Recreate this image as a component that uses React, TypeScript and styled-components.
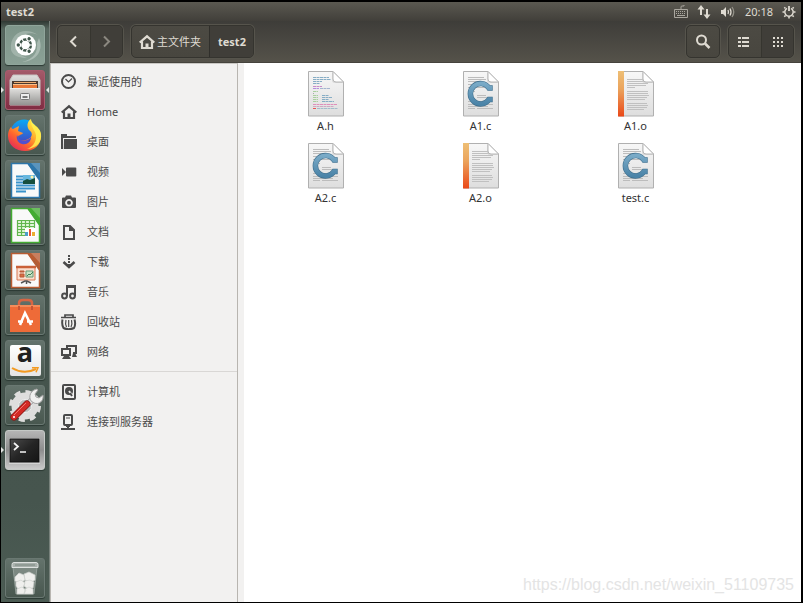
import React from "react";
import styled, { createGlobalStyle, css } from "styled-components";

const GlobalStyle = createGlobalStyle`
  *, *::before, *::after { box-sizing: border-box; }
  body {
    margin: 0;
    background: #000;
    color: #3c3c3c;
    font: 11px/16px "Noto Sans", "Noto Sans CJK SC", sans-serif;
  }
  button { font: inherit; color: inherit; border: 0; padding: 0; margin: 0; background: none; }
  svg { display: block; flex: none; }
  ul { list-style: none; margin: 0; padding: 0; }
`;

const Desktop = styled.div`
  display: flex;
  flex-direction: column;
  min-height: 100vh;
  padding: 2px 2px 1px 1px;
  background: #000;
`;

const MenuBar = styled.header`
  display: flex;
  align-items: center;
  justify-content: space-between;
  height: 19px;
  padding: 0 5px;
  background: linear-gradient(#5b5951, #413f3a);
  color: #dfdbd2;
`;

const WindowTitle = styled.strong`
  font-size: 11px;
`;

const Indicators = styled.div`
  display: flex;
  align-items: center;
  gap: 9px;
`;

const Indicator = styled.button`
  display: grid;
  place-items: center;
`;

const Clock = styled.time`
  font-size: 11px;
`;

const Workspace = styled.div`
  flex: 1;
  display: flex;
`;

const Launcher = styled.nav`
  flex: none;
  display: flex;
  flex-direction: column;
  gap: 5px;
  width: 49px;
  padding: 4px 0 4px 4px;
  background: linear-gradient(#2f3833 0, #56665e 8px, #5b6962 60px, #53615a 165px, #44534c 190px, #46554e 480px, #4c5c54 100%);
  border-right: 1px solid #77817b;
`;

const Tile = styled.button<{ $tone?: "dash" | "active" | "running" }>`
  position: relative;
  display: grid;
  place-items: center;
  flex: none;
  width: 40px;
  height: 40px;
  border-radius: 3px;
  border: 1px solid #6a7872;
  background: linear-gradient(#64736c, #48574f);
  box-shadow: 0 1px 1px #2b3933;
  ${(p) => p.$tone === "dash" && css`background: linear-gradient(#7e958a, #8ba196); border-color: #90a59b;`}
  ${(p) => p.$tone === "active" && css`background: linear-gradient(#a35a69, #812d43); border-color: #a95c6e;`}
  ${(p) => p.$tone === "running" && css`background: linear-gradient(#b5b5b5, #8d8d8d 50%, #c9c9c9); border-color: #c4c8c5;`}
  &:last-child { margin-top: auto; }
`;

const Marker = styled.span<{ $side: "left" | "right" }>`
  position: absolute;
  top: 16px;
  border: 3px solid transparent;
  ${(p) => (p.$side === "left" ? css`left: -5px; border-left-color: #e4e6e4; border-right: 0;` : css`right: -5px; border-right-color: #e4e6e4; border-left: 0;`)}
`;

const FileWindow = styled.main`
  flex: 1;
  min-width: 0;
  display: flex;
  flex-direction: column;
  background: #f2f1f0;
`;

const Toolbar = styled.div`
  display: flex;
  gap: 8px;
  height: 42px;
  padding: 4px 7px 4px 7px;
  background: linear-gradient(#3e3d39, #55524a);
  border-bottom: 1px solid #45433d;
  color: #dfdbd2;
`;

const Spacer = styled.div`
  flex: 1;
`;

const ButtonGroup = styled.div`
  display: flex;
  height: 33px;
  border: 1px solid #35342f;
  border-radius: 5px;
  box-shadow: 0 0 0 1px #56544c;
  background: linear-gradient(#4c4a43, #48463f);
  overflow: hidden;
`;

const ToolButton = styled.button<{ $pressed?: boolean }>`
  display: grid;
  place-items: center;
  width: 32px;
  background: ${(p) => (p.$pressed ? "#403e39" : "transparent")};
  & + & { border-left: 1px solid #36352f; }
  &:disabled { color: #8b8880; background: #403e39; }
`;

const Crumb = styled.button<{ $current?: boolean }>`
  display: flex;
  align-items: center;
  gap: 2px;
  padding: 0 8px 0 7px;
  font-weight: ${(p) => (p.$current ? 700 : 400)};
  background: ${(p) => (p.$current ? "#403e39" : "transparent")};
  & + & { border-left: 1px solid #302f2b; padding: 0 7px 0 8px; }
`;

const Content = styled.div`
  flex: 1;
  display: flex;
`;

const Sidebar = styled.nav`
  flex: none;
  width: 188px;
  padding-top: 3px;
  border: 1px solid #b8b5b0;
  border-top-color: #c9c7c3;
  border-bottom: 0;
  margin-right: 6px;
`;

const PlaceList = styled.ul`
  & + & {
    margin-top: 4px;
    padding-top: 5px;
    border-top: 1px solid #d9d7d5;
  }
`;

const Place = styled.a`
  display: flex;
  align-items: center;
  gap: 10px;
  height: 30px;
  padding-left: 10px;
  color: #4a4a4a;
  text-decoration: none;
`;

const Files = styled.section`
  position: relative;
  flex: 1;
  background: #fff;
  padding: 8px 4px;
`;

const FileGrid = styled.ul`
  display: grid;
  grid-template-columns: repeat(auto-fill, 155px);
`;

const FileItem = styled.li`
  display: flex;
  flex-direction: column;
  align-items: center;
  height: 72px;
  gap: 1px;
  color: #333;
`;

const Watermark = styled.p`
  position: absolute;
  right: 7px;
  bottom: 7px;
  margin: 0;
  font: 16px/20px "Liberation Sans", Arial, sans-serif;
  color: #e4e4e4;
`;

const S = ({ size = 16, children }: { size?: number; children: React.ReactNode }) => (
  <svg width={size} height={size} viewBox={`0 0 ${size} ${size}`} fill="none" stroke="currentColor" strokeWidth="2" aria-hidden="true">
    {children}
  </svg>
);

const HomeIcon = () => (
  <S><path d="M.7 8.500 8 2.300l7.300 6.200M3 7.500V14h10V7.500" strokeWidth="2.200" /><path d="M8 14V9.500" strokeWidth="3" /></S>
);

const placeIcons: Record<string, React.ReactNode> = {
  recent: <S><circle cx="7.500" cy="7.500" r="6.500" /><path d="m4.500 5 3 3L11 4.500" strokeWidth="1.200" /></S>,
  home: <HomeIcon />,
  desktop: <S><path d="M0 0h6v2h9v2H2v11H0z" fill="currentColor" stroke="none" /><path d="M3 5h13v10H2.800z" fill="currentColor" stroke="none" /></S>,
  video: <S><path d="M1 4v8l4-4zM5 6.500h1v3H5zM6 3.500h8.500q.8 0 .8.8v7.400q0 .8-.8.8H6q-1 0-1-1v-7q0-1 1-1z" fill="currentColor" stroke="none" /></S>,
  photo: <S><path fillRule="evenodd" d="M5 1.500h5l1 2h3q1 0 1 1V13q0 1-1 1H2q-1 0-1-1V4.500q0-1 1-1h2zM8 5a3.800 3.800 0 1 0 .01 0z" fill="currentColor" stroke="none" /><circle cx="8" cy="8.800" r="2" fill="currentColor" stroke="none" /></S>,
  document: <S><path d="M3 2h6l4 4v9H3z" /><path d="M8 1v6h6z" fill="currentColor" stroke="none" /></S>,
  download: <S><path d="M8 1v2m0 1v2m0 1v2" /><path d="m2.500 8 5.500 5 5.500-5" strokeWidth="2.500" /><path d="M6 10h4l-2 3z" fill="currentColor" stroke="none" /></S>,
  music: <S><path d="M6 12V2h8v10M6 3h8" /><circle cx="3.500" cy="12" r="2.400" /><circle cx="11.500" cy="12" r="2.400" /></S>,
  trash: <S><path d="M4 3V1h8v2M0 3.500h15" strokeWidth="1.700" /><path d="M1.500 5.500q-1 5 1 8.500 5 2.500 10.500 0 2-3.500 .5-8.500" /><path d="M5 6q-1 4 .5 7M7.700 6v7M10.500 6q1 4-.5 7" strokeWidth="1.200" /></S>,
  network: <S><path d="M6 4V2h9v7h-3M1 5h8v6H1z" /><path d="M1 15h9l-2-3H3zm10-2h5l-2-4h-2z" fill="currentColor" stroke="none" /></S>,
  computer: <S><rect x="2" y="1" width="12" height="14" rx="1" /><circle cx="8" cy="7" r="4" fill="currentColor" stroke="none" /><path d="m8 7 3 4" stroke="#f2f1f0" strokeWidth="1.800" /><path d="m9 9 2 3" /></S>,
  server: <S><rect x="3" y="1" width="8" height="10" rx="1" /><path d="M5 4h4" strokeWidth="1" /><path d="M7 11v4M0 15h14" /><path d="M5 12h4" /></S>,
};

const emblemAngles = [0, 120, 240];
const DashIcon = () => (
  <svg width="38" height="38" viewBox="0 0 38 38" aria-hidden="true">
    <path d="M5 24C3 7 19 0 32 9c-8-4-20-1-21 8-1 8 4 13 10 15-8 0-14-2-16-8z" fill="#c1cec7" opacity=".45" />
    <path d="M33 12c5 12-2 23-17 24 12-3 16-10 15-19z" fill="#ccd7d1" opacity=".5" />
    <circle cx="19.500" cy="19" r="10.500" fill="#fff" />
    <circle cx="19.500" cy="19" r="5.500" fill="none" stroke="#3f554a" strokeWidth="2.300" />
    {emblemAngles.map((a) => (
      <g key={a} transform={`rotate(${a} 19.5 19)`}>
        <circle cx="12.500" cy="19" r="2.700" fill="#fff" /><circle cx="12.300" cy="19" r="1.700" fill="#3f554a" />
        <path d="M23 19h4" stroke="#fff" strokeWidth="1.200" />
      </g>
    ))}
  </svg>
);

const CabinetIcon = () => (
  <svg width="34" height="34" viewBox="0 0 34 34" aria-hidden="true">
    <defs><linearGradient id="cabinet" x2="0" y2="1"><stop stopColor="#e0dfdd" /><stop offset="1" stopColor="#939391" /></linearGradient></defs>
    <path d="M5 2h24l3 5v25H2V7z" fill="url(#cabinet)" stroke="#c7c4c2" />
    <path d="M4 8h26v8H4z" fill="#4b3930" />
    <path d="M6 9.500h22" stroke="#efad70" /><path d="M5 11.500h24v4H5z" fill="#e87838" /><path d="M5 11.500h24" stroke="#f6c08c" />
    <path d="M2 15.500h30V32H2z" fill="url(#cabinet)" /><path d="M2 15.500h30" stroke="#eee" fill="none" />
    <rect x="12.500" y="20.500" width="9" height="6" rx="1" fill="#eee" stroke="#777" /><path d="M14.500 24h5" stroke="#777" strokeWidth="2" />
  </svg>
);

const FirefoxIcon = () => (
  <svg width="36" height="36" viewBox="0 0 36 36" aria-hidden="true">
    <defs>
      <linearGradient id="fox" x1=".9" y1=".1" x2=".2" y2="1"><stop stopColor="#fff34b" /><stop offset=".35" stopColor="#ffb82e" /><stop offset=".65" stopColor="#ff672c" /><stop offset="1" stopColor="#e3275d" /></linearGradient>
      <linearGradient id="globe" x2="0" y2="1"><stop stopColor="#0aa9f4" /><stop offset="1" stopColor="#4939bd" /></linearGradient>
    </defs>
    <circle cx="17" cy="16" r="13.500" fill="url(#globe)" />
    <path d="M4 8c0 3 1 4 2 4l6-3-1 5 5 2c-1 2-5 2-5 4 1 5 8 4 12 1 3-3 2-6-1-8-3-5-1-9 2-11-1 5 10 7 10 17 0 9-7 15-16 15S1 28 1 19c0-5 2-8 3-9z" fill="url(#fox)" />
    <path d="M10 18c2 7 11 7 14 2 0 5-4 8-9 7-4-1-6-5-5-9z" fill="#5150ce" />
    <path d="M24 2c-1 9 6 12 5 19-1 6-4 9-9 11 10-1 15-7 14-15C33 9 24 9 24 2z" fill="#fff151" opacity=".85" />
  </svg>
);

const OfficeIcon = ({ kind }: { kind: "writer" | "calc" | "impress" }) => {
  const color = { writer: "#2d76aa", calc: "#43ac32", impress: "#b95c32" }[kind];
  return (
    <svg width="36" height="38" viewBox="0 0 36 38" aria-hidden="true">
      <path d="M4.500 2.500H21L32.500 19v17.500h-28z" fill="#f9f9f9" stroke={color} strokeWidth="1.500" />
      <path d="M20 2h13v18C30 11 24 8 20 2z" fill={color} /><path d="M24 2h9v10z" fill="#fff" opacity=".22" />
      {kind === "writer" && <g><path d="M9 15.500h7M9 18.500h7M9 21.500h7M9 24.500h19M9 27.500h19M9 30.500h10" stroke="#3993cc" strokeWidth="1.800" /><path d="M16 14h12v9H16z" fill="#67b7df" /><path d="m16 20 4-2 3 1 5-2v6H16z" fill="#164f3e" /><circle cx="25" cy="16" r="1.500" fill="#fff4a9" /></g>}
      {kind === "calc" && <g><path d="M10 14h17v16H10z" fill="#e0f6d7" /><path d="M10.500 14.500h17v15h-17zM10 17.500h17M10 20.500h17M10 23.500h17M10 26.500h17M14.500 14v16M18.500 14v16M22.500 14v16" fill="none" stroke="#62b64e" strokeWidth="1.200" /><path d="M18 22h11v9H18z" fill="#fff" /><path d="M18 26h3v4h-3z" fill="#4f9ec8" /><path d="M22 23h2v7h-2z" fill="#e85637" /><path d="M25 26h3v4h-3z" fill="#ecaf32" /></g>}
      {kind === "impress" && <g><path d="M10 16h18v13H10z" fill="#faddcc" stroke="#d87953" /><path d="M9 16h20" stroke="#ca6139" strokeWidth="2.500" /><path d="M13 20h4v1h-4zM13 23h4v3h-4z" fill="#d66f43" stroke="#b95838" /><path d="M19 20h7v6h-7z" fill="#cbe2c4" stroke="#699979" /><path d="m20 25 2-2 1 1 3-3" fill="none" stroke="#408359" /><path d="m14 32 4-2h2l4 2m-4.500-2v3" fill="none" stroke="#555" strokeWidth="1.500" /></g>}
    </svg>
  );
};

const SoftwareIcon = () => (
  <svg width="36" height="38" viewBox="0 0 36 38" aria-hidden="true">
    <path d="M12 14V7q0-3 4-3h5q4 0 4 3v7" fill="none" stroke="#d76543" strokeWidth="2.500" />
    <path d="M3 9h30v27H3z" fill="#ee6b38" /><path d="M3 9h30v2H3z" fill="#f38b5a" />
    <path d="M12 10v4M25 10v4" stroke="#c75434" strokeWidth="2" />
    <path d="m13 29 5-12 6 12M11 25.500h5m4 0h6" fill="none" stroke="#fff" strokeWidth="2.600" />
  </svg>
);

const AmazonMark = styled.span`
  display: flex;
  flex-direction: column;
  align-items: center;
  width: 31px;
  height: 31px;
  border-radius: 2px;
  background: linear-gradient(#fff, #e5e5e5);
  color: #202020;
`;

const AmazonLetter = styled.span`
  margin-top: -8px;
  font: bold 27px/30px "Open Sans", sans-serif;
`;

const AmazonIcon = () => (
  <AmazonMark>
    <AmazonLetter>a</AmazonLetter>
    <svg width="28" height="7" viewBox="0 0 28 7" aria-hidden="true"><path d="M1 1q12 7 24 1" fill="none" stroke="#f39a20" strokeWidth="2" /><path d="M21 .7h6l-2 4.500" fill="none" stroke="#f39a20" strokeWidth="1.500" /></svg>
  </AmazonMark>
);

const SettingsIcon = () => (
  <svg width="38" height="38" viewBox="0 0 38 38" aria-hidden="true">
    <circle cx="19" cy="20" r="10" fill="none" stroke="#dededd" strokeWidth="7" />
    <circle cx="19" cy="20" r="14" fill="none" stroke="#dededd" strokeWidth="4" strokeDasharray="6 5" />
    <circle cx="19" cy="20" r="6.500" fill="#b7bab9" stroke="#f3f3f3" />
    <path d="m18 22 10-10" stroke="#999" strokeWidth="6" /><path d="m18 22 10-10" stroke="#e4e4e3" strokeWidth="4.500" />
    <path d="M25 15c-3-5 0-11 6-12l1 1-3 4 1 3 3 1 4-3c1 6-4 10-9 8z" fill="#f0f0ef" stroke="#a2a2a2" />
    <path d="m8 31 13-13" stroke="#8a1714" strokeWidth="7" strokeLinecap="round" />
    <path d="m8 31 13-13" stroke="#d32b25" strokeWidth="5.500" strokeLinecap="round" />
    <path d="m8 29 12-12" stroke="#f27770" strokeWidth="1" /><circle cx="8" cy="31" r="1" fill="#fff" />
  </svg>
);

const TerminalIcon = () => (
  <svg width="34" height="34" viewBox="0 0 34 34" aria-hidden="true">
    <defs><linearGradient id="screen" x2="1" y2="1"><stop stopColor="#4b4b4b" /><stop offset=".5" stopColor="#252525" /><stop offset="1" stopColor="#151515" /></linearGradient></defs>
    <rect x="1" y="5" width="31" height="26" fill="#d4d4d4" /><rect x="2" y="6" width="29" height="23" fill="url(#screen)" stroke="#111" />
    <path d="m6 10 4 3.500L6 17M12 19h6" fill="none" stroke="#f5f5f5" strokeWidth="1.700" />
  </svg>
);

const BinIcon = () => (
  <svg width="34" height="38" viewBox="0 0 34 38" aria-hidden="true">
    <path d="m5 8 3 27h18l3-27z" fill="#8e9993" opacity=".65" stroke="#b1bbb6" />
    <g fill="#efefed" stroke="#cfd1cf" strokeWidth=".7">
      <path d="m7 18 4-4 5 2 1 5-5 3-5-2zM16 15l5-2 6 3v5l-5 3-5-3z" />
      <path d="m8 23 5-2 4 3-2 5-5 1-2-3zM17 22l5-1 4 2-1 6-5 1-4-3z" />
      <path d="m9 30 5-2 4 3-2 4H9zM17 30l4-2 4 2v5h-9z" />
    </g>
    <path d="M4 5.500q0-2 2-2h22q2 0 2 2v3H4z" fill="#a8b0ac" stroke="#dde1df" /><path d="M7 6h20" stroke="#79867f" />
  </svg>
);

const codeRows: [number, number, number, string][] = [
  [5, 6, 16, "#86adc5"], [5, 8, 18, "#86adc5"], [5, 10, 9, "#86adc5"], [5, 12, 7, "#86adc5"],
  [5, 15, 9, "#c98ac8"], [5, 17, 6, "#b48ce0"], [12, 17, 10, "#a5b5cf"], [5, 20, 5, "#a9cf9f"], [5, 22, 1, "#aaa"],
  [5, 24, 5, "#a9cf9f"], [14, 24, 7, "#86adc5"], [5, 26, 5, "#a9cf9f"], [14, 26, 10, "#86adc5"],
  [5, 28, 5, "#a9cf9f"], [14, 28, 7, "#86adc5"], [5, 30, 5, "#a9cf9f"], [14, 30, 12, "#86adc5"],
  [5, 33, 24, "#e08fbb"], [5, 35, 21, "#cfa9c2"], [5, 37, 3, "#e95757"], [9, 37, 21, "#a4bccb"],
];

const DocumentIcon = ({ kind }: { kind: string }) => (
  <svg width="36" height="46" viewBox="0 0 36 46" aria-hidden="true">
    <defs>
      <linearGradient id="paper" x2="0" y2="1"><stop stopColor="#f7f7f7" /><stop offset="1" stopColor="#dedede" /></linearGradient>
      <linearGradient id="band" x2="0" y2="1"><stop stopColor="#eebf75" /><stop offset=".4" stopColor="#eba35c" /><stop offset="1" stopColor="#ea4818" /></linearGradient>
      <linearGradient id="letter" x2="0" y2="1"><stop stopColor="#79aac7" /><stop offset="1" stopColor="#4b84a8" /></linearGradient>
    </defs>
    <path d="M.500.500h24.500l10.500 10.500v34h-35z" fill="url(#paper)" stroke="#b0b0b0" />
    {kind === "h" && codeRows.map(([x, y, w, color]) => (
      <path key={`${x}-${y}`} d={`M${x} ${y}.5h${w}`} stroke={color} strokeDasharray="3 .5" />
    ))}
    {kind === "c" && <g>
      <path d="M5 6.500h16M5 8.500h18M5 10.500h14M5 13.500h20M5 16.500h18M5 20.500h7M14 24.500h9M14 26.500h12M5 30.500h22M5 33.500h25M5 35.500h20M5 37.500h7m2 0h16" stroke="#bcbcbc" />
      <path d="M29.700 17H26A10.200 10.200 0 1 0 26 28.500h3.700" fill="none" stroke="#3f6e8c" strokeWidth="5.500" />
      <path d="M29.200 17H26A10.200 10.200 0 1 0 26 28.500h3.200" fill="none" stroke="url(#letter)" strokeWidth="4.300" />
    </g>}
    {kind === "o" && <g>
      <path d="M0 0h6v45.500H0z" fill="url(#band)" stroke="none" />
      <path d="M9 8.500h19M9 10.500h20M9 12.500h21M9 14.500h19M9 16.500h8M9 20.500h21M9 22.500h21M9 24.500h22M9 26.500h20M9 28.500h18M9 32.500h20M9 34.500h21M9 36.500h20M9 38.500h17" stroke="#c0c0c0" />
    </g>}
    <path d="M24 1v8q0 3 3 3h8z" fill="#c6c6c6" opacity=".6" />
    <path d="M25 .500v7.500q0 3 3 3h7.500z" fill="#fff" stroke="#b7b7b7" />
  </svg>
);

const launcherItems: { label: string; icon: React.ReactNode; tone?: "dash" | "active" | "running" }[] = [
  { label: "Dash", icon: <DashIcon />, tone: "dash" },
  { label: "文件", icon: <CabinetIcon />, tone: "active" },
  { label: "Firefox", icon: <FirefoxIcon /> },
  { label: "LibreOffice Writer", icon: <OfficeIcon kind="writer" /> },
  { label: "LibreOffice Calc", icon: <OfficeIcon kind="calc" /> },
  { label: "LibreOffice Impress", icon: <OfficeIcon kind="impress" /> },
  { label: "Ubuntu 软件", icon: <SoftwareIcon /> },
  { label: "Amazon", icon: <AmazonIcon /> },
  { label: "系统设置", icon: <SettingsIcon /> },
  { label: "终端", icon: <TerminalIcon />, tone: "running" },
  { label: "回收站", icon: <BinIcon /> },
];

const places = [
  [["recent", "最近使用的"], ["home", "Home"], ["desktop", "桌面"], ["video", "视频"], ["photo", "图片"], ["document", "文档"], ["download", "下载"], ["music", "音乐"], ["trash", "回收站"], ["network", "网络"]],
  [["computer", "计算机"], ["server", "连接到服务器"]],
];

const files = ["A.h", "A1.c", "A1.o", "A2.c", "A2.o", "test.c"];

export default function App() {
  return (
    <>
      <GlobalStyle />
      <Desktop>
        <MenuBar>
          <WindowTitle>test2</WindowTitle>
          <Indicators>
            <Indicator aria-label="键盘">
              <svg width="14" height="14" viewBox="0 0 14 14" fill="none" stroke="#aaa79f" aria-hidden="true"><path d="M.500 4.500h13v8H.500zM7 4V2q0-1 1-1h2V0" /><path d="M2 6.500h10M2 8.500h10" strokeDasharray="1 1" /><path d="M3 10.500h8" /></svg>
            </Indicator>
            <Indicator aria-label="网络连接">
              <svg width="14" height="14" viewBox="0 0 14 14" fill="#dfdbd2" aria-hidden="true"><path d="M4 0 .5 4.500H3V10h2V4.500h2.500zM10 14l3.500-4.500H11V4H9v5.500H6.500z" /></svg>
            </Indicator>
            <Indicator aria-label="音量">
              <svg width="16" height="14" viewBox="0 0 16 14" fill="none" stroke="#dfdbd2" strokeWidth="1.300" aria-hidden="true"><path d="M1 5h2l3-3v10L3 9H1z" fill="#dfdbd2" stroke="none" /><path d="M8 5q1 2 0 4M10 3.500q2 3.500 0 7" /><path d="M12 2q3.500 5 0 10" stroke="#929087" /></svg>
            </Indicator>
            <Clock dateTime="20:18">20:18</Clock>
            <Indicator aria-label="会话">
              <svg width="14" height="14" viewBox="0 0 14 14" fill="none" stroke="#dfdbd2" aria-hidden="true"><path d="M5 3.300a4.200 4.200 0 1 0 4 0" strokeWidth="1.500" /><path d="M7 1v5" strokeWidth="1.800" /><path d="M.500 7h2m9 0h2M7 11.500v2M2.300 2.300l1.200 1.200m7 0 1.200-1.200m-9.400 9.400 1.200-1.200m7 0 1.200 1.200" strokeWidth="1.600" /></svg>
            </Indicator>
          </Indicators>
        </MenuBar>
        <Workspace>
          <Launcher aria-label="启动器">
            {launcherItems.map(({ label, icon, tone }) => (
              <Tile key={label} aria-label={label} $tone={tone}>
                {icon}
                {(tone === "active" || tone === "running") && <Marker $side="left" />}
                {tone === "active" && <Marker $side="right" />}
              </Tile>
            ))}
          </Launcher>
          <FileWindow>
            <Toolbar>
              <ButtonGroup>
                <ToolButton aria-label="后退"><S><path d="m10 2.500-5 5 5 5" /></S></ToolButton>
                <ToolButton aria-label="前进" disabled><S><path d="m5 2.500 5 5-5 5" /></S></ToolButton>
              </ButtonGroup>
              <ButtonGroup>
                <Crumb><HomeIcon />主文件夹</Crumb>
                <Crumb $current>test2</Crumb>
              </ButtonGroup>
              <Spacer />
              <ButtonGroup>
                <ToolButton aria-label="搜索"><S><circle cx="6.500" cy="6" r="4.500" /><path d="m10 9.500 4.500 4.500" strokeWidth="2.500" /></S></ToolButton>
              </ButtonGroup>
              <ButtonGroup>
                <ToolButton aria-label="列表视图"><S><path d="M1 4h3m1 0h7M1 8h3m1 0h7M1 12h3m1 0h7" /></S></ToolButton>
                <ToolButton aria-label="图标视图" $pressed><S><path d="M3 4h10M3 8h10M3 12h10" strokeDasharray="2 2" /></S></ToolButton>
              </ButtonGroup>
            </Toolbar>
            <Content>
              <Sidebar aria-label="位置">
                {places.map((group, i) => (
                  <PlaceList key={i}>
                    {group.map(([icon, label]) => (
                      <li key={label}><Place href={`#${icon}`}>{placeIcons[icon]}{label}</Place></li>
                    ))}
                  </PlaceList>
                ))}
              </Sidebar>
              <Files aria-label="test2">
                <FileGrid>
                  {files.map((name) => (
                    <FileItem key={name}><DocumentIcon kind={name.split(".")[1]} />{name}</FileItem>
                  ))}
                </FileGrid>
                <Watermark>https://blog.csdn.net/weixin_51109735</Watermark>
              </Files>
            </Content>
          </FileWindow>
        </Workspace>
      </Desktop>
    </>
  );
}
